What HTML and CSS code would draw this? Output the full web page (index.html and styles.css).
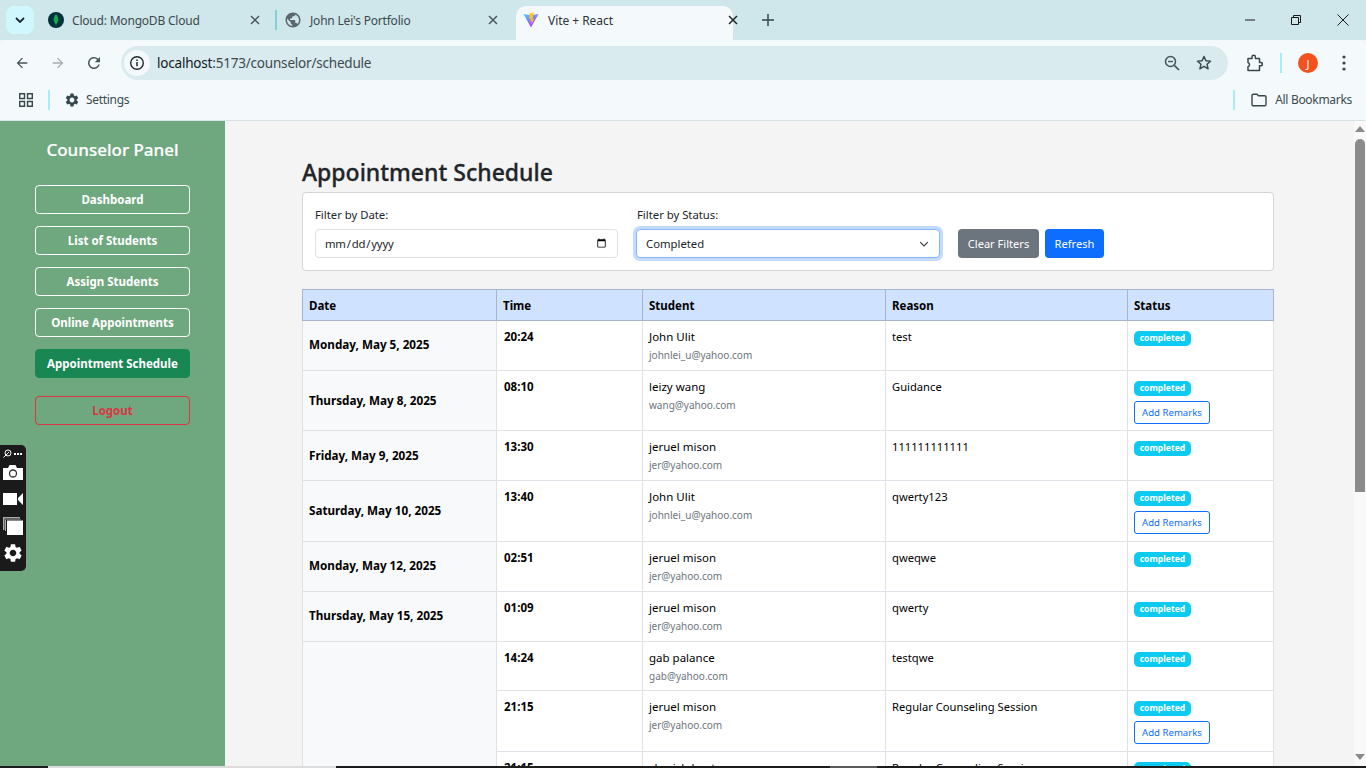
FILE: index.html
```html
<!DOCTYPE html>
<html>
    <head>
        <title>Vite + React</title>
        <link rel="stylesheet" href="styles.css">
    </head>
    <body>
        <svg class="defs" width="0" height="0">
            <symbol id="gear" viewBox="0 0 24 24"><path d="M19.14 12.94c.04-.3.06-.61.06-.94 0-.32-.02-.64-.07-.94l2.03-1.58a.49.49 0 0 0 .12-.61l-1.92-3.32a.488.488 0 0 0-.59-.22l-2.39.96c-.5-.38-1.03-.7-1.62-.94l-.36-2.54a.484.484 0 0 0-.48-.41h-3.84c-.24 0-.43.17-.47.41l-.36 2.54c-.59.24-1.13.57-1.62.94l-2.39-.96c-.22-.08-.47 0-.59.22L2.74 8.87c-.12.21-.08.47.12.61l2.03 1.58c-.05.3-.09.63-.09.94s.02.64.07.94l-2.03 1.58a.49.49 0 0 0-.12.61l1.92 3.32c.12.22.37.29.59.22l2.39-.96c.5.38 1.03.7 1.62.94l.36 2.54c.05.24.24.41.48.41h3.84c.24 0 .44-.17.47-.41l.36-2.54c.59-.24 1.13-.56 1.62-.94l2.39.96c.22.08.47 0 .59-.22l1.92-3.32c.12-.22.07-.47-.12-.61l-2.01-1.58zM12 15.6c-1.98 0-3.6-1.62-3.6-3.6s1.62-3.6 3.6-3.6 3.6 1.62 3.6 3.6-1.62 3.6-3.6 3.6z"/></symbol>
            <symbol id="x" viewBox="0 0 10 10"><path d="M1 1l8 8M9 1l-8 8" fill="none" stroke="currentColor" stroke-width="1.5"/></symbol>
            <linearGradient id="viteBody" x1="0" y1="0" x2="0.6" y2="1"><stop offset="0" stop-color="#41d1ff"/><stop offset="1" stop-color="#bd34fe"/></linearGradient>
        </svg>

        <!-- browser window top -->
        <div class="tabstrip">
            <div class="tab-search">
                <svg width="10" height="6" viewBox="0 0 10 6"><path d="M1 1l4 4 4-4" fill="none" stroke="#1c2b30" stroke-width="1.8"/></svg>
            </div>
            <div class="tab tab-first">
                <svg class="favicon" width="16" height="16" viewBox="0 0 16 16"><circle cx="8" cy="8" r="8" fill="#02303c"/><path d="M8 2c2 2.500 2.600 4.500 2.200 6.500C9.900 10.500 8.800 11.500 8.300 12.200L8.200 14H7.800L7.700 12.200C7.200 11.500 6.100 10.500 5.800 8.500 5.400 6.500 6 4.500 8 2z" fill="#13aa52"/></svg>
                <span class="tab-title">Cloud: MongoDB Cloud</span>
                <svg class="tab-close" width="10" height="10"><use href="#x"/></svg>
            </div>
            <div class="tab-sep"></div>
            <div class="tab tab-second">
                <svg class="favicon" width="18" height="18" viewBox="0 0 24 24" fill="#5c686e"><path d="M12 2C6.480 2 2 6.480 2 12s4.480 10 10 10 10-4.480 10-10S17.520 2 12 2zm-1 17.930c-3.950-.490-7-3.850-7-7.930 0-.620.080-1.210.210-1.790L9 15v1c0 1.100.900 2 2 2v1.930zm6.900-2.540c-.260-.810-1-1.390-1.900-1.390h-1v-3c0-.550-.450-1-1-1H8v-2h2c.550 0 1-.450 1-1V7h2c1.100 0 2-.900 2-2v-.410c2.930 1.190 5 4.060 5 7.410 0 2.080-.800 3.970-2.100 5.390z"/></svg>
                <span class="tab-title">John Lei's Portfolio</span>
                <svg class="tab-close" width="10" height="10"><use href="#x"/></svg>
            </div>
            <div class="tab tab-active">
                <svg class="favicon" width="16" height="16" viewBox="0 0 16 16"><path d="M0.500 2L8 3.300 15.500 2 8 15.500z" fill="url(#viteBody)"/><path d="M10.800 0.500L6.500 1.500 6.200 7 7.800 6.700 7.400 9.500 8.900 9 8.300 12.500 11 7 9.400 7.300z" fill="#ffc517"/></svg>
                <span class="tab-title">Vite + React</span>
                <svg class="tab-close tab-close-dark" width="10" height="10"><use href="#x"/></svg>
            </div>
            <svg class="new-tab" width="12" height="12" viewBox="0 0 12 12"><path d="M6 0v12M0 6h12" stroke="#37474c" stroke-width="1.500"/></svg>
            <div class="win-controls">
                <svg width="10" height="10" viewBox="0 0 10 10"><path d="M0 5h10" stroke="#1a1a1a"/></svg>
                <svg width="10" height="10" viewBox="0 0 10 10"><path d="M0.500 2.500h7v7h-7zM2.500 2.500v-2h7v7h-2" fill="none" stroke="#1a1a1a"/></svg>
                <svg width="12" height="12" viewBox="0 0 12 12"><path d="M0.500 0.500l11 11M11.500 0.500l-11 11" stroke="#1a1a1a"/></svg>
            </div>
        </div>

        <div class="toolbar">
            <div class="nav-btns">
                <svg width="16" height="16" viewBox="0 0 24 24" fill="#47555a"><path d="M20 11H7.830l5.590-5.590L12 4l-8 8 8 8 1.410-1.410L7.830 13H20v-2z"/></svg>
                <svg width="16" height="16" viewBox="0 0 24 24" fill="#a3adb0"><path d="M4 11h12.170l-5.590-5.590L12 4l8 8-8 8-1.410-1.410L16.170 13H4v-2z"/></svg>
                <svg class="reload" width="18" height="18" viewBox="0 0 24 24" fill="#47555a"><path d="M17.650 6.350A7.958 7.958 0 0 0 12 4c-4.420 0-7.990 3.580-7.990 8s3.570 8 7.990 8c3.730 0 6.840-2.550 7.730-6h-2.080A5.990 5.990 0 0 1 12 18c-3.310 0-6-2.690-6-6s2.690-6 6-6c1.660 0 3.140.690 4.220 1.780L13 11h7V4l-2.350 2.350z"/></svg>
            </div>
            <div class="omnibox">
                <span class="site-info">
                    <svg width="16" height="16" viewBox="0 0 16 16"><circle cx="8" cy="8" r="6.300" fill="none" stroke="#1f2d31" stroke-width="1.400"/><path d="M8 7v4.300M8 4.500v1.400" stroke="#1f2d31" stroke-width="1.500"/></svg>
                </span>
                <span class="url"><span class="url-host">localhost</span>:5173/counselor/schedule</span>
                <svg class="omni-zoom" width="16" height="16" viewBox="0 0 16 16"><circle cx="6.500" cy="6.500" r="5" fill="none" stroke="#47555a" stroke-width="1.500"/><path d="M10.300 10.300L15 15" stroke="#47555a" stroke-width="1.700"/><path d="M4 6.500h5" stroke="#47555a" stroke-width="1.300"/></svg>
                <svg class="omni-star" width="16" height="16" viewBox="0 0 16 16"><path d="M8 1.500l1.900 4.300 4.600.4-3.500 3 1.100 4.600L8 11.400l-4.100 2.400L5 9.200l-3.500-3 4.600-.4z" fill="none" stroke="#3b494e" stroke-width="1.500" stroke-linejoin="round"/></svg>
            </div>
            <svg class="ext-icon" width="16" height="18" viewBox="0 0 16 18"><path d="M1 4.500h4V3a1.700 1.700 0 0 1 3.400 0v1.500h4.100v4h1.300a1.600 1.600 0 0 1 0 3.200h-1.300v4.800H1v-3.700a2.100 2.100 0 0 0 1.500-2.100A2.200 2.200 0 0 0 1 8.500z" fill="none" stroke="#37474c" stroke-width="1.500" stroke-linejoin="round"/></svg>
            <div class="bar-sep bar-sep-tool"></div>
            <div class="avatar">J</div>
            <svg class="menu-dots" width="4" height="16" viewBox="0 0 4 16"><circle cx="2" cy="2" r="1.600" fill="#37474c"/><circle cx="2" cy="8" r="1.600" fill="#37474c"/><circle cx="2" cy="14" r="1.600" fill="#37474c"/></svg>
        </div>

        <div class="bookmarks">
            <svg class="apps-icon" width="14" height="14" viewBox="0 0 14 14"><path d="M0.700 0.700h4.800v4.800H0.700zM8.500 0.700h4.800v4.800H8.500zM0.700 8.500h4.800v4.800H0.700zM8.500 8.500h4.800v4.800H8.500z" fill="none" stroke="#37474c" stroke-width="1.400"/></svg>
            <div class="bar-sep bar-sep-apps"></div>
            <svg class="bm-gear" width="16" height="16" fill="#37474c"><use href="#gear"/></svg>
            <span class="bm-text">Settings</span>
            <div class="bar-sep bar-sep-all"></div>
            <svg class="bm-folder" width="16" height="14" viewBox="0 0 16 14"><path d="M1 2.500A1.300 1.300 0 0 1 2.300 1.200H6L7.500 2.800H13.700A1.300 1.300 0 0 1 15 4.100V11.500A1.300 1.300 0 0 1 13.700 12.800H2.300A1.300 1.300 0 0 1 1 11.500z" fill="none" stroke="#37474c" stroke-width="1.400"/></svg>
            <span class="bm-text">All Bookmarks</span>
        </div>

        <!-- the app -->
        <div class="viewport">
            <div class="sidebar">
                <h2 class="side-title">Counselor Panel</h2>
                <a class="side-btn">Dashboard</a>
                <a class="side-btn">List of Students</a>
                <a class="side-btn">Assign Students</a>
                <a class="side-btn">Online Appointments</a>
                <a class="side-btn side-active">Appointment Schedule</a>
                <a class="side-btn side-logout">Logout</a>
            </div>

            <div class="main">
                <h1 class="page-title">Appointment Schedule</h1>
                <div class="filters">
                    <div class="field field-date">
                        <label>Filter by Date:</label>
                        <input class="form-control" type="date">
                    </div>
                    <div class="field field-status">
                        <label>Filter by Status:</label>
                        <select class="form-control form-select">
                            <option>Completed</option>
                        </select>
                    </div>
                    <button class="btn btn-gray">Clear Filters</button>
                    <button class="btn btn-blue">Refresh</button>
                </div>

                <table class="schedule">
                    <colgroup>
                        <col class="col-date"><col class="col-time"><col class="col-student"><col class="col-reason"><col class="col-status">
                    </colgroup>
                    <thead>
                        <tr><th>Date</th><th>Time</th><th>Student</th><th>Reason</th><th>Status</th></tr>
                    </thead>
                    <tbody>
                        <tr class="row-short">
                            <td class="date-cell">Monday, May 5, 2025</td>
                            <td class="time-cell">20:24</td>
                            <td><div class="name">John Ulit</div><div class="email">johnlei_u@yahoo.com</div></td>
                            <td class="reason">test</td>
                            <td><span class="badge">completed</span></td>
                        </tr>
                        <tr class="row-tall">
                            <td class="date-cell">Thursday, May 8, 2025</td>
                            <td class="time-cell">08:10</td>
                            <td><div class="name">leizy wang</div><div class="email">wang@yahoo.com</div></td>
                            <td class="reason">Guidance</td>
                            <td><span class="badge">completed</span><button class="remarks">Add Remarks</button></td>
                        </tr>
                        <tr class="row-short">
                            <td class="date-cell">Friday, May 9, 2025</td>
                            <td class="time-cell">13:30</td>
                            <td><div class="name">jeruel mison</div><div class="email">jer@yahoo.com</div></td>
                            <td class="reason">111111111111</td>
                            <td><span class="badge">completed</span></td>
                        </tr>
                        <tr class="row-tall">
                            <td class="date-cell">Saturday, May 10, 2025</td>
                            <td class="time-cell">13:40</td>
                            <td><div class="name">John Ulit</div><div class="email">johnlei_u@yahoo.com</div></td>
                            <td class="reason">qwerty123</td>
                            <td><span class="badge">completed</span><button class="remarks">Add Remarks</button></td>
                        </tr>
                        <tr class="row-short">
                            <td class="date-cell">Monday, May 12, 2025</td>
                            <td class="time-cell">02:51</td>
                            <td><div class="name">jeruel mison</div><div class="email">jer@yahoo.com</div></td>
                            <td class="reason">qweqwe</td>
                            <td><span class="badge">completed</span></td>
                        </tr>
                        <tr class="row-short">
                            <td class="date-cell">Thursday, May 15, 2025</td>
                            <td class="time-cell">01:09</td>
                            <td><div class="name">jeruel mison</div><div class="email">jer@yahoo.com</div></td>
                            <td class="reason">qwerty</td>
                            <td><span class="badge">completed</span></td>
                        </tr>
                        <tr class="row-short">
                            <td class="date-cell" rowspan="3"></td>
                            <td class="time-cell">14:24</td>
                            <td><div class="name">gab palance</div><div class="email">gab@yahoo.com</div></td>
                            <td class="reason">testqwe</td>
                            <td><span class="badge">completed</span></td>
                        </tr>
                        <tr class="row-tall">
                            <td class="time-cell">21:15</td>
                            <td><div class="name">jeruel mison</div><div class="email">jer@yahoo.com</div></td>
                            <td class="reason">Regular Counseling Session</td>
                            <td><span class="badge">completed</span><button class="remarks">Add Remarks</button></td>
                        </tr>
                        <tr class="row-short">
                            <td class="time-cell">21:15</td>
                            <td><div class="name">cherish kent</div><div class="email">jer@yahoo.com</div></td>
                            <td class="reason">Regular Counseling Session</td>
                            <td><span class="badge">completed</span></td>
                        </tr>
                    </tbody>
                </table>
            </div>

            <div class="scrollbar">
                <svg class="scroll-arrow" width="10" height="6" viewBox="0 0 10 6"><path d="M5 0l5 6H0z" fill="#8a8a8a"/></svg>
                <div class="scroll-thumb"></div>
                <svg class="scroll-arrow scroll-down" width="10" height="6" viewBox="0 0 10 6"><path d="M0 0h10L5 6z" fill="#8a8a8a"/></svg>
            </div>

            <!-- screen capture widget, floats over the page -->
            <div class="capture">
                <div class="cap-top">
                    <svg width="9" height="9" viewBox="0 0 9 9"><circle cx="5" cy="4" r="3" fill="none" stroke="#fff"/><path d="M0.500 8.500L6 3" stroke="#fff"/></svg>
                    <span class="cap-dots"></span>
                </div>
                <svg class="cap-camera" width="20" height="16" viewBox="0 0 20 16"><path d="M0 4h5l1.500-3h6L14 4h6v12H0z" fill="#fff"/><circle cx="10" cy="9.500" r="3.500" fill="none" stroke="#333" stroke-width="1.300"/></svg>
                <svg class="cap-video" width="20" height="14" viewBox="0 0 20 14"><path d="M0 1h14v12H0zM15 6l5-5v12l-5-5z" fill="#fff"/></svg>
                <svg class="cap-windows" width="20" height="18" viewBox="0 0 20 18"><path d="M0 0h17v1.500H1.500V13H0z" fill="#aaa"/><path d="M2 2.500h16V3H3v11H2z" fill="#aaa"/><path d="M4 3.500h16V18H4z" fill="#fff"/></svg>
                <svg class="cap-gear" width="22" height="22" fill="#fff"><use href="#gear"/></svg>
            </div>
        </div>

        <div class="bottom-edge"><span class="edge-light"></span><span class="edge-gray"></span></div>
    </body>
</html>
```

FILE: styles.css
```css
* {
    box-sizing: border-box;
}

html, body {
    margin: 0;
    height: 100%;
    overflow: hidden;
}

body {
    position: relative;
    display: flex;
    flex-direction: column;
    font-family: "Noto Sans", Arial, sans-serif;
    background-color: #f4f4f4;
}

.defs {
    position: absolute;
}

/* tab strip */
.tabstrip {
    display: flex;
    align-items: center;
    height: 40px;
    flex-shrink: 0;
    background-color: #cfe6ea;
    color: #37474c;
}

.tab-search {
    display: flex;
    align-items: center;
    justify-content: center;
    width: 28px;
    height: 28px;
    margin-left: 6px;
    border-radius: 8px;
    background-color: #cff7fd;
}

.tab {
    display: flex;
    align-items: center;
    height: 34px;
    align-self: flex-end;
    margin-bottom: 3px;
    font-size: 12px;
}

.tab-first {
    width: 227px;
    margin-left: 14px;
}

.tab-second {
    width: 220px;
    margin-left: 7px;
}

.favicon {
    flex-shrink: 0;
}

.tab-first .tab-title {
    margin-left: 8px;
}

.tab-second .tab-title {
    margin-left: 8px;
}

.tab-title {
    flex: 1;
    color: #3c4a4f;
    white-space: nowrap;
    letter-spacing: -0.2px;
}

.tab-close {
    color: #4a575b;
    margin-right: 15px;
}

.tab-second .tab-close {
    margin-right: 6px;
}

.tab-close-dark {
    color: #1c2629;
}

.tab-sep {
    width: 2px;
    height: 20px;
    background-color: #7fd0dc;
}

.tab-active {
    width: 217px;
    margin-left: 12px;
    margin-bottom: 0;
    padding: 0 0 6px 7px;
    border-radius: 10px 10px 0 0;
    background-color: #f4fafb;
}

.tab-active .tab-title {
    margin-left: 9px;
    color: #2b3538;
    letter-spacing: -0.05px;
}

.tab-active .tab-close {
    margin-right: -5px;
}

.new-tab {
    margin-left: 29px;
}

.win-controls {
    display: flex;
    align-items: center;
    margin-left: auto;
    gap: 36px;
    padding-right: 17px;
}

/* toolbar */
.toolbar {
    display: flex;
    align-items: center;
    height: 40px;
    flex-shrink: 0;
    padding-top: 6px;
    background-color: #f4fafb;
    border-radius: 8px 8px 0 0;
    margin-top: 0;
}

.nav-btns {
    display: flex;
    align-items: center;
    gap: 20px;
    margin-left: 14px;
    width: 107px;
}

.reload {
    margin-left: -1px;
}

.omnibox {
    display: flex;
    align-items: center;
    width: 1107px;
    height: 34px;
    border-radius: 17px;
    background-color: #d9ebee;
}

.site-info {
    display: flex;
    align-items: center;
    justify-content: center;
    width: 26px;
    height: 26px;
    margin-left: 3px;
    border-radius: 50%;
    background-color: #f4fafb;
}

.url {
    margin-left: 7px;
    font-size: 13.500px;
    color: #3c4a4f;
    letter-spacing: -0.2px;
}

.url-host {
    color: #121c1f;
}

.omni-zoom {
    margin-left: auto;
}

.omni-star {
    margin-left: 16px;
    margin-right: 16px;
}

.ext-icon {
    margin-left: 19px;
}

.bar-sep {
    width: 2px;
    height: 20px;
    background-color: #a5ecf8;
}

.bar-sep-tool {
    margin-left: 17px;
}

.avatar {
    display: flex;
    align-items: center;
    justify-content: center;
    width: 20px;
    height: 20px;
    margin-left: 16px;
    border-radius: 50%;
    background-color: #f4511e;
    color: #fff;
    font-size: 11px;
}

.menu-dots {
    margin-left: 24px;
}

/* bookmarks */
.bookmarks {
    display: flex;
    align-items: center;
    height: 41px;
    flex-shrink: 0;
    padding-bottom: 1px;
    background-color: #f4fafb;
    border-bottom: 1px solid #d8e2e4;
    font-size: 12px;
    color: #3c4a4f;
}

.apps-icon {
    margin-left: 19px;
}

.bar-sep-apps {
    margin-left: 15px;
}

.bm-gear {
    margin-left: 14px;
}

.bm-text {
    margin-left: 6px;
    letter-spacing: -0.3px;
}

.bar-sep-all {
    margin-left: auto;
}

.bm-folder {
    margin-left: 16px;
    margin-right: 2px;
}

.bookmarks > .bm-text:last-child {
    margin-right: 14px;
}

/* page */
.viewport {
    position: relative;
    display: flex;
    flex: 1;
    min-height: 0;
    overflow: hidden;
}

.sidebar {
    display: flex;
    flex-direction: column;
    width: 225px;
    flex-shrink: 0;
    padding: 16px 35px 0;
    background-color: #6fa87f;
}

.side-title {
    margin: 0 0 23px;
    color: #fff;
    font-size: 17px;
    line-height: 25px;
    font-weight: 500;
    text-align: center;
    white-space: nowrap;
    -webkit-text-stroke: 0.2px #fff;
}

.side-btn {
    display: block;
    height: 29px;
    margin-bottom: 12px;
    border: 1px solid #fff;
    border-radius: 4px;
    color: #fff;
    font-size: 11.500px;
    font-weight: 700;
    line-height: 27px;
    text-align: center;
    white-space: nowrap;
}

.side-active {
    background-color: #198754;
    border-color: #198754;
}

.side-logout {
    margin-top: 6px;
    border-color: #dc3545;
    color: #dc3545;
}

.main {
    flex: 1;
    min-width: 0;
    padding: 37px 80px 0 77px;
}

.page-title {
    margin: 0 0 5px;
    color: #212529;
    font-size: 23px;
    line-height: 29px;
    font-weight: 500;
    -webkit-text-stroke: 0.3px #212529;
}

.filters {
    display: flex;
    align-items: flex-end;
    height: 79px;
    padding: 0 12px 12px;
    margin-bottom: 18px;
    background-color: #fff;
    border: 1px solid #d3d6d9;
    border-radius: 4px;
}

.field label {
    display: block;
    margin-bottom: 6px;
    color: #212529;
    font-size: 11.300px;
    line-height: 16px;
}

.field-status label {
    margin-left: 1px;
}

.field-date {
    width: 303px;
    margin-right: 18px;
}

.field-status {
    width: 304px;
    margin-right: 18px;
}

.form-control {
    display: block;
    width: 100%;
    height: 29px;
    padding: 0 8px 0 9px;
    background-color: #fff;
    border: 1px solid #dee2e6;
    border-radius: 4px;
    color: #212529;
    font-family: "Noto Sans", Arial, sans-serif;
    font-size: 11.300px;
}

.form-control[type=date] {
    padding-left: 8px;
    padding-right: 8px;
    letter-spacing: -0.2px;
}

.form-select {
    appearance: none;
    border-color: #86b7fe;
    box-shadow: 0 0 0 3px rgba(13, 110, 253, 0.25);
    background-image: url("data:image/svg+xml,%3csvg xmlns='http://www.w3.org/2000/svg' viewBox='0 0 16 16'%3e%3cpath fill='none' stroke='%23343a40' stroke-width='1.500' d='M3 5.500l5 5 5-5'/%3e%3c/svg%3e");
    background-repeat: no-repeat;
    background-position: right 9px center;
    background-size: 12px;
    outline: none;
}

.btn {
    height: 29px;
    padding: 0;
    border: none;
    border-radius: 4px;
    color: #fff;
    font-family: "Noto Sans", Arial, sans-serif;
    font-size: 11.100px;
}

.btn-gray {
    width: 81px;
    margin-right: 6px;
    background-color: #6c757d;
}

.btn-blue {
    width: 59px;
    background-color: #0d6efd;
}

/* table */
.schedule {
    width: 972px;
    table-layout: fixed;
    border-collapse: collapse;
    background-color: #fff;
    color: #000;
    font-size: 11.500px;
    line-height: 16px;
}

.col-date { width: 194px; }
.col-time { width: 146px; }
.col-student { width: 243px; }
.col-reason { width: 242px; }
.col-status { width: 146px; }

.schedule th, .schedule td {
    padding: 8px 6px 6px;
    border: 1px solid #dee2e6;
    text-align: left;
    vertical-align: top;
}

.schedule th {
    height: 31px;
    padding: 1px 6px 0;
    vertical-align: middle;
    background-color: #cfe2ff;
    border-color: #a6b5cc;
    font-weight: 700;
}

.row-short {
    height: 49.800px;
}

.row-tall {
    height: 60.680px;
}

.schedule .date-cell {
    padding: 6px 6px 8px;
    vertical-align: middle;
    background-color: #f8f9fa;
    font-size: 11.700px;
    font-weight: 700;
}

.schedule .time-cell {
    padding-left: 7px;
    font-weight: 700;
}

.reason {
    font-size: 11.200px;
}

.email {
    margin-top: 3px;
    color: #6c757d;
    font-size: 10px;
    line-height: 15px;
}

.badge {
    display: block;
    width: 57px;
    height: 15px;
    margin-top: 2px;
    border-radius: 5px;
    background-color: #0dcaf0;
    color: #fff;
    font-size: 8.600px;
    font-weight: 700;
    line-height: 15px;
    text-align: center;
}

.remarks {
    display: block;
    width: 76px;
    height: 23px;
    margin-top: 5px;
    padding: 0;
    background-color: #fff;
    border: 1px solid #0d6efd;
    border-radius: 3px;
    color: #0d6efd;
    font-family: "Noto Sans", Arial, sans-serif;
    font-size: 9.600px;
}

/* scrollbar */
.scrollbar {
    position: relative;
    display: flex;
    flex-direction: column;
    align-items: center;
    width: 12px;
    flex-shrink: 0;
    padding-top: 5px;
    background-color: #f9f9f9;
}

.scroll-thumb {
    width: 10px;
    height: 353px;
    margin-top: 7px;
    border-radius: 5px 5px 0 0;
    background-color: #8b8b8b;
}

.scroll-down {
    position: absolute;
    bottom: 8px;
}

/* capture widget */
.capture {
    position: absolute;
    left: 0;
    top: 324px;
    display: flex;
    flex-direction: column;
    align-items: center;
    width: 26px;
    height: 126px;
    padding-top: 4px;
    border-radius: 0 5px 5px 0;
    background-color: #1a1a1a;
}

.cap-top {
    display: flex;
    align-items: center;
    gap: 2px;
    height: 9px;
}

.cap-dots {
    width: 9px;
    height: 2px;
    background-image: linear-gradient(90deg, #fff 2px, transparent 2px);
    background-size: 3px 2px;
}

.cap-camera {
    margin-top: 6px;
}

.cap-video {
    margin-top: 12px;
}

.cap-windows {
    margin-top: 11px;
}

.cap-gear {
    margin-top: 7px;
}

.bottom-edge {
    position: absolute;
    left: 0;
    right: 0;
    bottom: 0;
    height: 2px;
    background-color: #1c1c1c;
}

.edge-light {
    position: absolute;
    left: 48px;
    width: 288px;
    height: 2px;
    background-color: #dcdcdc;
}

.edge-gray {
    position: absolute;
    left: 830px;
    width: 47px;
    height: 2px;
    background-color: #5a5a5a;
}
```
